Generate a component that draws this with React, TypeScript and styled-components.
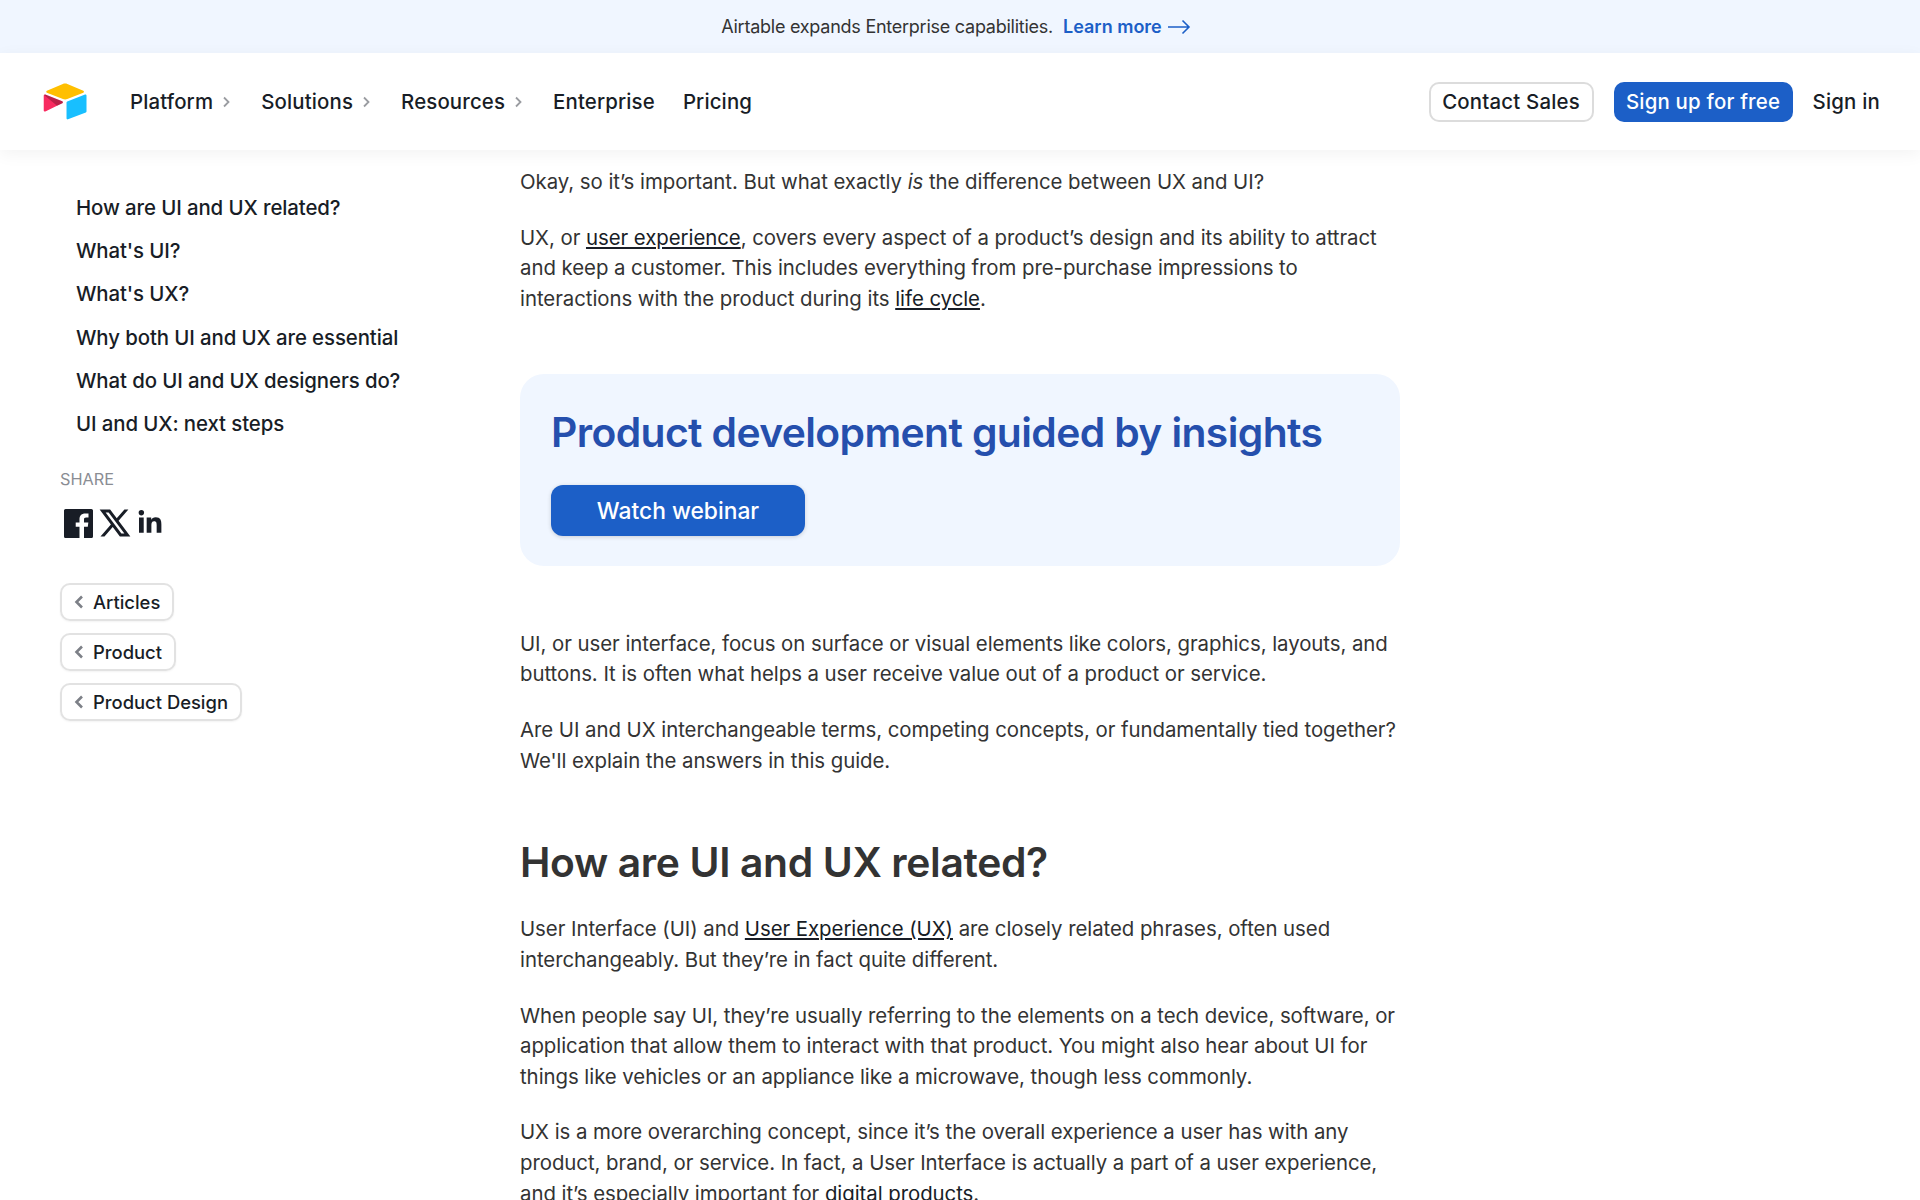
import React from 'react';
import styled, { createGlobalStyle } from 'styled-components';
import { FaLinkedinIn } from 'react-icons/fa';
import { RiTwitterXLine } from 'react-icons/ri';

const navItems = [
  { label: 'Platform', caret: true },
  { label: 'Solutions', caret: true },
  { label: 'Resources', caret: true },
  { label: 'Enterprise', caret: false },
  { label: 'Pricing', caret: false },
];

const tocItems = [
  'How are UI and UX related?',
  "What's UI?",
  "What's UX?",
  'Why both UI and UX are essential',
  'What do UI and UX designers do?',
  'UI and UX: next steps',
];

const crumbs = ['Articles', 'Product', 'Product Design'];

const Caret = () => (
  <svg width="10" height="12" viewBox="0 0 10 12" fill="none">
    <path d="M3 1.5 L7.5 6 L3 10.5" stroke="#9a9ca1" strokeWidth="1.8" />
  </svg>
);

const BackCaret = () => (
  <svg width="10" height="14" viewBox="0 0 10 14" fill="none">
    <path d="M8 1.5 L2.5 7 L8 12.5" stroke="#7d8087" strokeWidth="2.6" />
  </svg>
);

const FacebookIcon = () => (
  <svg width="29" height="29" viewBox="0 0 24 24" fill="currentColor">
    <path d="M22.675 0H1.325C.593 0 0 .593 0 1.325v21.351C0 23.407.593 24 1.325 24H12.82v-9.294H9.692v-3.622h3.128V8.413c0-3.1 1.893-4.788 4.659-4.788 1.325 0 2.463.099 2.795.143v3.24l-1.918.001c-1.504 0-1.795.715-1.795 1.763v2.313h3.587l-.467 3.622h-3.12V24h6.116c.73 0 1.323-.593 1.323-1.325V1.325C24 .593 23.407 0 22.675 0z" />
  </svg>
);

const Logo = () => (
  <svg width="44" height="37" viewBox="8 9 182 151">
    <path
      fill="#FFBF00"
      d="M90.0389,12.3675 L24.0799,39.6605 C20.4119,41.1785 20.4499,46.3885 24.1409,47.8515 L90.3759,74.1175 C96.1959,76.4255 102.6769,76.4255 108.4959,74.1175 L174.7319,47.8515 C178.4219,46.3885 178.4609,41.1785 174.7919,39.6605 L108.8339,12.3675 C102.8159,9.8775 96.0559,9.8775 90.0389,12.3675"
    />
    <path
      fill="#18BFFF"
      d="M105.3122,88.4608 L105.3122,154.0768 C105.3122,157.1978 108.4592,159.3348 111.3602,158.1848 L185.1662,129.5368 C186.8512,128.8688 187.9562,127.2408 187.9562,125.4288 L187.9562,59.8128 C187.9562,56.6918 184.8092,54.5548 181.9082,55.7048 L108.1022,84.3528 C106.4182,85.0208 105.3122,86.6488 105.3122,88.4608"
    />
    <path
      fill="#F82B60"
      d="M88.0781,91.8464 L66.1741,102.4224 L63.9501,103.4974 L17.7121,125.6524 C14.7811,127.0664 11.0401,124.9304 11.0401,121.6744 L11.0401,60.0884 C11.0401,58.9104 11.6441,57.8934 12.4541,57.1274 C12.7921,56.7884 13.1751,56.5094 13.5731,56.2884 C14.6781,55.6254 16.2541,55.4484 17.5941,55.9784 L87.7101,83.7594 C91.2741,85.1734 91.5541,90.1674 88.0781,91.8464"
    />
    <path
      fill="#000"
      fillOpacity="0.25"
      d="M88.0781,91.8464 L66.1741,102.4224 L12.4541,57.1274 C12.7921,56.7884 13.1751,56.5094 13.5731,56.2884 C14.6781,55.6254 16.2541,55.4484 17.5941,55.9784 L87.7101,83.7594 C91.2741,85.1734 91.5541,90.1674 88.0781,91.8464"
    />
  </svg>
);

const App: React.FC = () => {
  return (
    <Page>
      <GlobalStyle />
      <Banner>
        <BannerText>Airtable expands Enterprise capabilities.</BannerText>
        <BannerLink>
          Learn more
          <svg width="24" height="16" viewBox="0 0 24 16" fill="none">
            <path d="M1 8 H22 M15.5 1.5 L22 8 L15.5 14.5" stroke="#1c5fc7" strokeWidth="1.6" />
          </svg>
        </BannerLink>
      </Banner>
      <Nav>
        <Brand>
          <Logo />
        </Brand>
        <NavList>
          {navItems.map((item) => (
            <NavItem key={item.label} $caret={item.caret}>
              {item.label}
              {item.caret && <Caret />}
            </NavItem>
          ))}
        </NavList>
        <NavActions>
          <OutlineButton>Contact Sales</OutlineButton>
          <PrimaryButton>Sign up for free</PrimaryButton>
          <SignIn>Sign in</SignIn>
        </NavActions>
      </Nav>
      <Body>
        <Sidebar>
          <Toc>
            {tocItems.map((item) => (
              <TocItem key={item}>{item}</TocItem>
            ))}
          </Toc>
          <ShareLabel>SHARE</ShareLabel>
          <ShareRow>
            <FacebookIcon />
            <RiTwitterXLine size={36} />
            <FaLinkedinIn size={26} />
          </ShareRow>
          <Crumbs>
            {crumbs.map((crumb) => (
              <Crumb key={crumb}>
                <BackCaret />
                {crumb}
              </Crumb>
            ))}
          </Crumbs>
        </Sidebar>
        <Article>
          <Para>
            Okay, so it’s important. But what exactly <em>is</em> the difference between UX and UI?
          </Para>
          <Para>
            UX, or <u>user experience</u>, covers every aspect of a product’s design and its ability to attract
            and keep a customer. This includes everything from pre-purchase impressions to interactions with
            the product during its <u>life cycle</u>.
          </Para>
          <PromoCard>
            <PromoTitle>Product development guided by insights</PromoTitle>
            <PromoButton>Watch webinar</PromoButton>
          </PromoCard>
          <Para>
            UI, or user interface, focus on surface or visual elements like colors, graphics, layouts, and
            buttons. It is often what helps a user receive value out of a product or service.
          </Para>
          <Para>
            Are UI and UX interchangeable terms, competing concepts, or fundamentally tied together? We'll
            explain the answers in this guide.
          </Para>
          <Heading>How are UI and UX related?</Heading>
          <Para>
            User Interface (UI) and <u>User Experience (UX)</u> are closely related phrases, often used
            interchangeably. But they’re in fact quite different.
          </Para>
          <Para>
            When people say UI, they’re usually referring to the elements on a tech device, software, or
            application that allow them to interact with that product. You might also hear about UI for things
            like vehicles or an appliance like a microwave, though less commonly.
          </Para>
          <Para>
            UX is a more overarching concept, since it’s the overall experience a user has with any product,
            brand, or service. In fact, a User Interface is actually a part of a user experience, and it’s
            especially important for <u>digital products</u>.
          </Para>
        </Article>
      </Body>
    </Page>
  );
};

export default App;

const GlobalStyle = createGlobalStyle`
  html, body {
    margin: 0;
    padding: 0;
    background: #fff;
  }
  * {
    box-sizing: border-box;
  }
`;

const Page = styled.div`
  height: 1200px;
  overflow: hidden;
  font-family: Inter, 'Liberation Sans', sans-serif;
  color: #333;
`;

const Banner = styled.div`
  height: 53px;
  background: #f0f6ff;
  display: flex;
  align-items: center;
  justify-content: center;
  gap: 10px;
  padding-right: 8px;
  font-size: 18px;
`;

const BannerText = styled.span`
  color: #333;
  letter-spacing: -0.25px;
`;

const BannerLink = styled.span`
  display: flex;
  align-items: center;
  gap: 5px;
  color: #1c5fc7;
  font-weight: 600;
`;

const Nav = styled.header`
  position: relative;
  height: 97px;
  background: #fff;
  display: flex;
  align-items: center;
  padding: 0 40px 0 43px;
  box-shadow: 0 4px 16px rgba(0, 0, 0, 0.05);
`;

const Brand = styled.div`
  display: flex;
  width: 87px;
`;

const NavList = styled.nav`
  display: flex;
  align-items: center;
  gap: 28px;
`;

const NavItem = styled.span<{ $caret: boolean }>`
  display: flex;
  align-items: center;
  gap: 8px;
  font-size: 20.4px;
  font-weight: 500;
  color: #181d26;
  letter-spacing: 0.15px;
  margin-right: ${(p) => (p.$caret ? '2px' : '0')};
`;

const NavActions = styled.div`
  margin-left: auto;
  display: flex;
  align-items: center;
  gap: 20px;
`;

const OutlineButton = styled.button`
  height: 40px;
  width: 165px;
  padding: 0;
  font: 500 20.4px Inter, sans-serif;
  letter-spacing: 0.2px;
  color: #181d26;
  background: #fff;
  border: 2px solid #dcdcdc;
  border-radius: 10px;
`;

const PrimaryButton = styled.button`
  height: 40px;
  width: 179px;
  padding: 0;
  font: 500 20.4px Inter, sans-serif;
  letter-spacing: 0.2px;
  color: #fff;
  background: #1c5fc7;
  border: 0;
  border-radius: 10px;
`;

const SignIn = styled.span`
  font-size: 20.4px;
  font-weight: 500;
  letter-spacing: 0.2px;
  color: #181d26;
`;

const Body = styled.div`
  display: flex;
  align-items: flex-start;
`;

const Sidebar = styled.aside`
  width: 520px;
  flex: none;
  padding: 36px 0 0 60px;
`;

const Toc = styled.div`
  display: flex;
  flex-direction: column;
  padding-left: 16px;
`;

const TocItem = styled.div`
  height: 43.2px;
  display: flex;
  align-items: center;
  font-size: 20.4px;
  font-weight: 500;
  letter-spacing: -0.1px;
  color: #181d26;
`;

const ShareLabel = styled.div`
  margin-top: 24px;
  font-size: 16.3px;
  line-height: 20px;
  color: #8a8d93;
`;

const ShareRow = styled.div`
  display: flex;
  align-items: center;
  gap: 4px;
  margin-top: 16px;
  padding-left: 4px;
  color: #181d26;
`;

const Crumbs = styled.div`
  display: flex;
  flex-direction: column;
  align-items: flex-start;
  gap: 12px;
  margin-top: 42px;
`;

const Crumb = styled.div`
  height: 38px;
  display: flex;
  align-items: center;
  gap: 9px;
  padding: 0 12px;
  font-size: 18.4px;
  font-weight: 500;
  color: #181d26;
  border: 2px solid #e2e2e2;
  border-radius: 10px;
  box-shadow: 0 1px 2px rgba(0, 0, 0, 0.05);
`;

const Article = styled.main`
  width: 880px;
  flex: none;
  padding-top: 17px;
`;

const Para = styled.p`
  margin: 0 0 25.2px;
  font-size: 20.4px;
  line-height: 30.6px;
  letter-spacing: -0.05px;
  color: #333;

  u {
    color: #181d26;
    text-underline-offset: 2px;
  }
`;

const PromoCard = styled.section`
  margin: 59.5px 0 62.5px;
  height: 192px;
  padding: 29px 30px;
  background: #f0f6ff;
  border-radius: 24px;
  display: flex;
  flex-direction: column;
  align-items: flex-start;
`;

const PromoTitle = styled.h3`
  margin: 0 0 0 1px;
  font-size: 40.8px;
  line-height: 58px;
  font-weight: 600;
  letter-spacing: -0.6px;
  color: #254fad;
`;

const PromoButton = styled.button`
  margin: 24px 0 0 1px;
  width: 254px;
  height: 51px;
  font: 500 22.8px Inter, sans-serif;
  color: #fff;
  background: #1c5fc7;
  border: 0;
  border-radius: 12px;
  box-shadow: 0 1px 4px rgba(0, 0, 0, 0.16);
`;

const Heading = styled.h2`
  margin: 61px 0 27px;
  font-size: 40.8px;
  line-height: 50px;
  font-weight: 600;
  letter-spacing: -0.35px;
  color: #333;
`;
